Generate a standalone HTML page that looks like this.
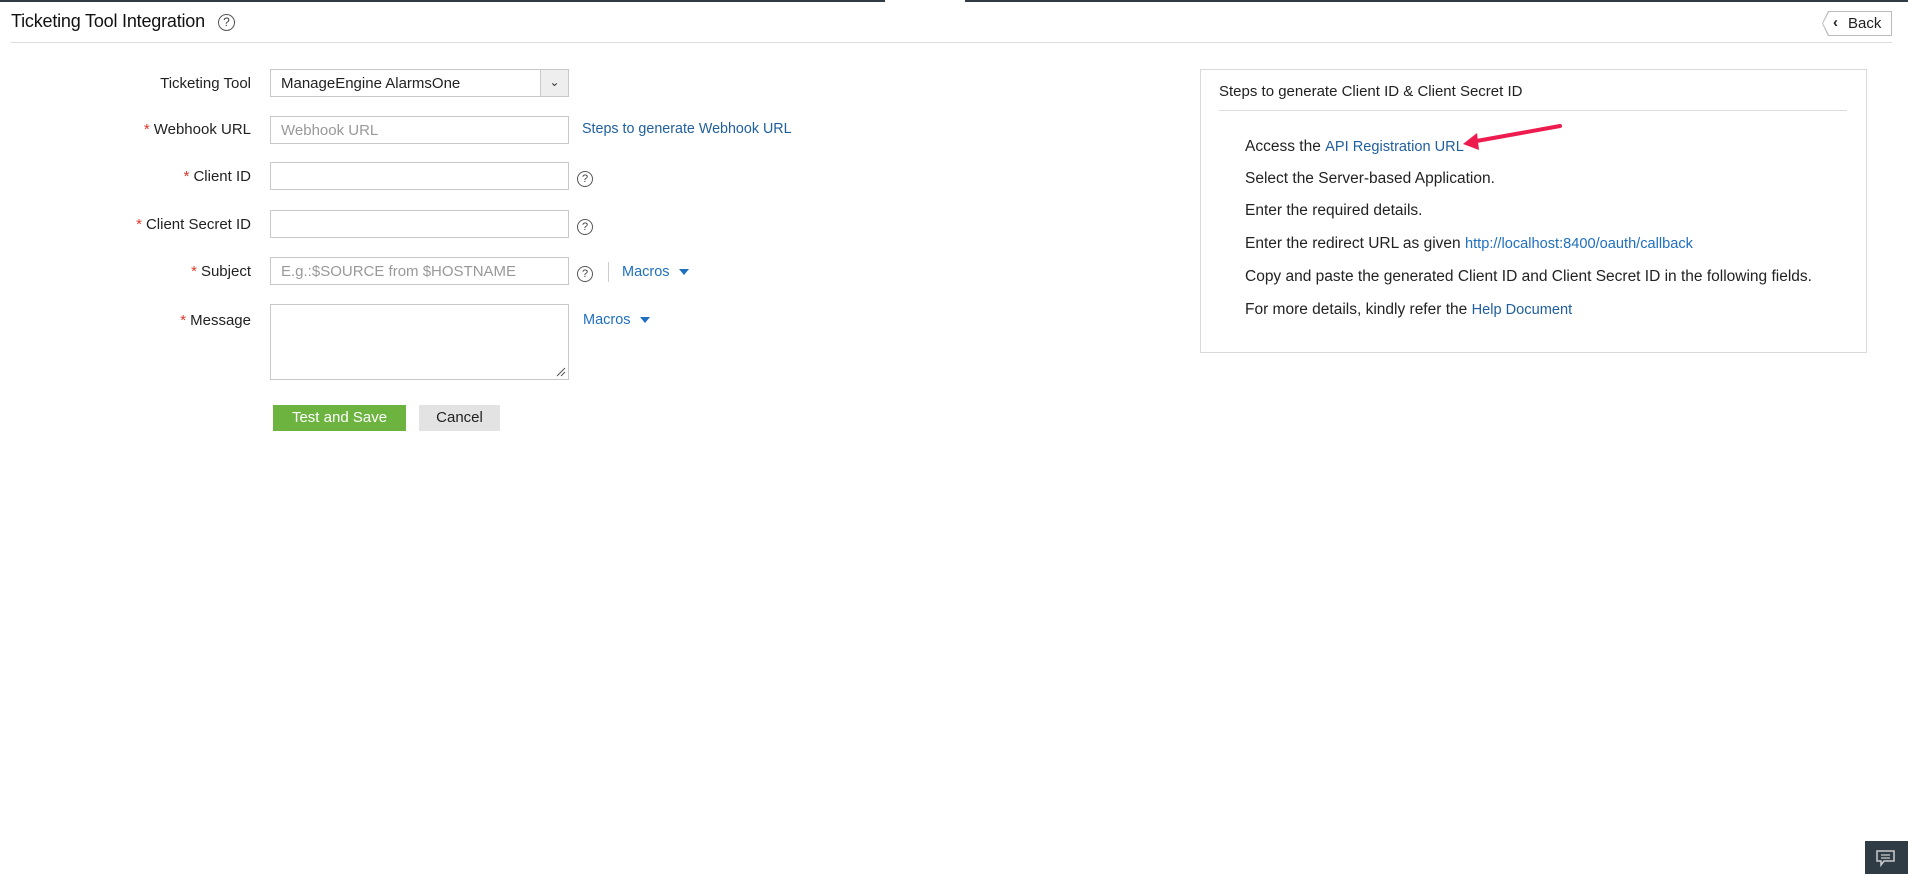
<!DOCTYPE html>
<html><head><meta charset="utf-8"><style>
*{box-sizing:border-box;margin:0;padding:0}
body{width:1908px;height:874px;background:#fff;font-family:"Liberation Sans",sans-serif;color:#222;position:relative;overflow:hidden;font-size:15px}
.a{position:absolute}
.lbl{position:absolute;right:1657px;text-align:right;white-space:nowrap;font-size:15px}
.req{color:#e0362c;margin-right:4px}
.inp{position:absolute;left:270px;width:299px;border:1px solid #c8c8c8;background:#fff;color:#999;padding-left:10px;font-size:15px;display:flex;align-items:center}
.q{position:absolute;width:16px;height:16px;border:1.3px solid #555;border-radius:50%;font-size:11px;line-height:14px;text-align:center;color:#444}
.link{color:#1f5f9e}
.li{position:absolute;left:1245px;font-size:15.5px;white-space:nowrap}
.li .link{font-size:14.6px}
.caret{display:inline-block;width:0;height:0;border-left:5px solid transparent;border-right:5px solid transparent;border-top:6px solid #1f6fbf;margin-left:9px;vertical-align:middle}
</style></head><body>
<div class="a" style="left:0;top:0;width:885px;height:2px;background:#2f3b45"></div>
<div class="a" style="left:965px;top:0;width:943px;height:2px;background:#2f3b45"></div>
<div class="a" style="left:11px;top:11px;font-size:18px;letter-spacing:-0.2px;color:#111">Ticketing Tool Integration</div>
<div class="q" style="left:218px;top:14px;width:17px;height:17px;font-size:12px">?</div>
<div class="a" style="left:11px;top:42px;width:1881px;height:1px;background:#ddd"></div>
<div class="a" style="left:1822px;top:11px;width:70px;height:25px;background:#bbb;clip-path:polygon(6px 0,100% 0,100% 100%,6px 100%,0 50%)"></div>
<div class="a" style="left:1823px;top:12px;width:68px;height:23px;background:#fff;clip-path:polygon(6px 0,100% 0,100% 100%,6px 100%,0 50%)"></div>
<div class="a" style="left:1833px;top:14px;font-size:15px;font-weight:bold">‹</div>
<div class="a" style="left:1848px;top:15px;font-size:15px">Back</div>

<div class="lbl" style="top:75px">Ticketing Tool</div>
<div class="inp" style="top:69px;height:28px;color:#222">ManageEngine AlarmsOne</div>
<div class="a" style="left:540px;top:70px;width:28px;height:26px;background:#eee;border-left:1px solid #ccc;text-align:center;font-size:12px;line-height:24px;color:#333">&#8964;</div>

<div class="lbl" style="top:121px"><span class="req">*</span>Webhook URL</div>
<div class="inp" style="top:116px;height:28px">Webhook URL</div>
<div class="a link" style="left:582px;top:121px;font-size:14.3px">Steps to generate Webhook URL</div>

<div class="lbl" style="top:168px"><span class="req">*</span>Client ID</div>
<div class="inp" style="top:162px;height:28px"></div>
<div class="q" style="left:577px;top:171px">?</div>

<div class="lbl" style="top:216px"><span class="req">*</span>Client Secret ID</div>
<div class="inp" style="top:210px;height:28px"></div>
<div class="q" style="left:577px;top:219px">?</div>

<div class="lbl" style="top:263px"><span class="req">*</span>Subject</div>
<div class="inp" style="top:257px;height:28px">E.g.:$SOURCE from $HOSTNAME</div>
<div class="q" style="left:577px;top:266px">?</div>
<div class="a" style="left:608px;top:262px;width:1px;height:20px;background:#ccc"></div>
<div class="a link" style="left:622px;top:264px;font-size:14.5px;color:#1f6fbf">Macros<span class="caret"></span></div>

<div class="lbl" style="top:312px"><span class="req">*</span>Message</div>
<div class="inp" style="top:304px;height:76px"></div>
<svg class="a" style="left:556px;top:367px" width="10" height="10"><path d="M1 9L9 1M5 9L9 5" stroke="#555" stroke-width="1"/></svg>
<div class="a link" style="left:583px;top:312px;font-size:14.5px;color:#1f6fbf">Macros<span class="caret"></span></div>

<div class="a" style="left:273px;top:405px;width:133px;height:26px;background:#6db33f;color:#fff;text-align:center;line-height:26px;font-size:15px">Test and Save</div>
<div class="a" style="left:419px;top:405px;width:81px;height:26px;background:#e3e3e3;color:#222;text-align:center;line-height:26px;font-size:15px">Cancel</div>

<div class="a" style="left:1200px;top:69px;width:667px;height:284px;border:1px solid #d9d9d9"></div>
<div class="a" style="left:1219px;top:83px;font-size:15px">Steps to generate Client ID &amp; Client Secret ID</div>
<div class="a" style="left:1219px;top:110px;width:628px;height:1px;background:#ddd"></div>
<div class="li" style="top:138px">Access the <span class="link">API Registration URL</span></div>
<div class="li" style="top:170px">Select the Server-based Application.</div>
<div class="li" style="top:202px">Enter the required details.</div>
<div class="li" style="top:235px">Enter the redirect URL as given <span class="link" style="color:#1f6fbf">http://localhost:8400/oauth/callback</span></div>
<div class="li" style="top:268px">Copy and paste the generated Client ID and Client Secret ID in the following fields.</div>
<div class="li" style="top:301px">For more details, kindly refer the <span class="link">Help Document</span></div>
<svg class="a" style="left:1455px;top:118px" width="115" height="36"><path d="M105 8L16 24" stroke="#ee1c4e" stroke-width="4" stroke-linecap="round"/><path d="M8 26L22 15L24 32Z" fill="#ee1c4e"/></svg>

<div class="a" style="left:1865px;top:841px;width:43px;height:33px;background:#2f3b45"></div>
<svg class="a" style="left:1875px;top:849px" width="22" height="18"><path d="M2 2H19V12H9L6 16V12H2Z" fill="none" stroke="#ccc" stroke-width="1.5"/><path d="M6 6H15M6 9H15" stroke="#ccc" stroke-width="1.3"/></svg>
</body></html>
